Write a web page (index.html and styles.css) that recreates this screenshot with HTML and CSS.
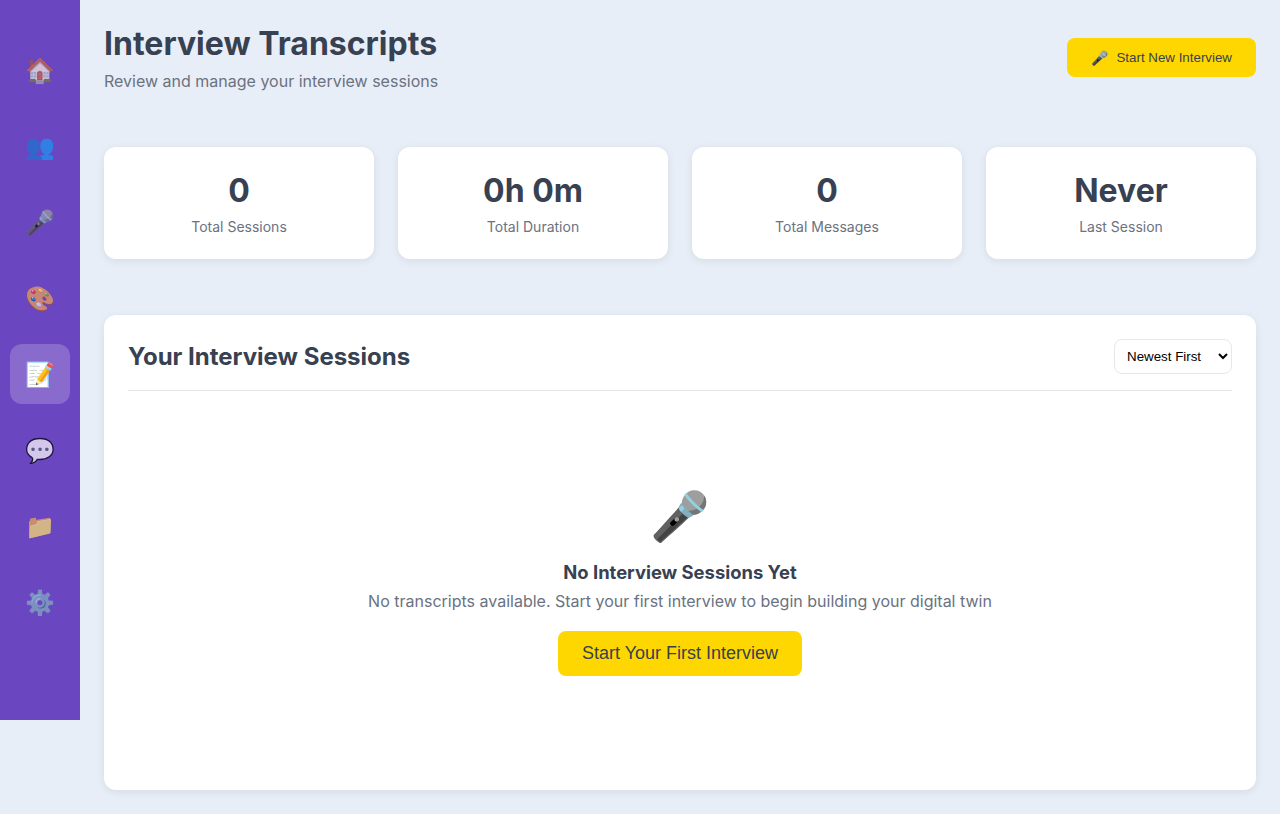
FILE: index.html
```html
<!DOCTYPE html>
<html lang="en">
<head>
<meta charset="utf-8">
<title>Interview Transcripts</title>
<link rel="stylesheet" href="styles.css">
</head>
<body>
<div class="app">
  <nav class="sidebar">
    <a class="nav-item">🏠</a>
    <a class="nav-item">👥</a>
    <a class="nav-item">🎤</a>
    <a class="nav-item">🎨</a>
    <a class="nav-item active">📝</a>
    <a class="nav-item">💬</a>
    <a class="nav-item">📁</a>
    <a class="nav-item">⚙️</a>
  </nav>
  <main class="main">
    <header class="page-header">
      <div>
        <h1 class="page-title">Interview Transcripts</h1>
        <p class="page-subtitle">Review and manage your interview sessions</p>
      </div>
      <button class="btn-new"><span class="btn-icon">🎤</span>Start New Interview</button>
    </header>
    <section class="stats">
      <div class="stat-card"><div class="stat-value">0</div><div class="stat-label">Total Sessions</div></div>
      <div class="stat-card"><div class="stat-value">0h 0m</div><div class="stat-label">Total Duration</div></div>
      <div class="stat-card"><div class="stat-value">0</div><div class="stat-label">Total Messages</div></div>
      <div class="stat-card"><div class="stat-value">Never</div><div class="stat-label">Last Session</div></div>
    </section>
    <section class="panel">
      <div class="panel-header">
        <h2 class="panel-title">Your Interview Sessions</h2>
        <select class="sort-select"><option>Newest First</option><option>Oldest First</option></select>
      </div>
      <div class="empty">
        <div class="empty-icon">🎤</div>
        <h3 class="empty-title">No Interview Sessions Yet</h3>
        <p class="empty-text">No transcripts available. Start your first interview to begin building your digital twin</p>
        <button class="btn-first">Start Your First Interview</button>
      </div>
    </section>
  </main>
</div>
</body>
</html>
```
FILE: styles.css
```css
* { box-sizing: border-box; margin: 0; padding: 0; }
html, body { height: 100%; }
body {
  background: #e8eef7;
  font-family: Inter, "Noto Sans", sans-serif;
  color: #374151;
  overflow: hidden;
  text-rendering: optimizeSpeed;
}
.app { display: flex; align-items: flex-start; }
.sidebar {
  width: 80px;
  height: 720px;
  flex: none;
  background: #6b46c1;
  padding: 40px 10px 0;
  display: flex;
  flex-direction: column;
  gap: 16px;
}
.nav-item {
  width: 60px;
  height: 60px;
  border-radius: 12px;
  display: flex;
  align-items: center;
  justify-content: center;
  font-size: 24px;
  opacity: 0.7;
}
.nav-item.active { background: rgba(255,255,255,0.2); opacity: 1; }
.main { flex: 1; min-width: 0; padding: 24px; }
.page-header {
  display: flex;
  justify-content: space-between;
  align-items: center;
  margin-bottom: 56px;
}
.page-title { font-size: 32px; font-weight: 700; line-height: 39px; color: #374151; }
.page-subtitle { font-size: 16px; line-height: 20px; color: #6b7280; margin-top: 8px; }
.btn-new {
  display: flex;
  align-items: center;
  height: 39px;
  padding: 0 24px;
  background: #ffd700;
  border: none;
  border-radius: 8px;
  font-family: "Liberation Sans", Arial, sans-serif;
  font-size: 13.33px;
  color: #374151;
}
.btn-icon { margin-right: 8px; font-size: 14px; }
.stats {
  display: grid;
  grid-template-columns: repeat(4, 1fr);
  gap: 24px;
  margin-bottom: 56px;
}
.stat-card {
  height: 112px;
  background: #fff;
  border-radius: 12px;
  box-shadow: 0 2px 8px rgba(0,0,0,0.08);
  padding-top: 24px;
  text-align: center;
}
.stat-value { font-size: 32px; font-weight: 700; line-height: 39px; color: #374151; }
.stat-label { font-size: 14px; line-height: 17px; color: #6b7280; margin-top: 8px; }
.panel {
  height: 475px;
  background: #fff;
  border-radius: 12px;
  box-shadow: 0 2px 8px rgba(0,0,0,0.08);
  padding: 24px;
}
.panel-header {
  display: flex;
  justify-content: space-between;
  align-items: center;
  padding-bottom: 16px;
  border-bottom: 1px solid #e5e7eb;
}
.panel-title { font-size: 24px; font-weight: 700; line-height: 29px; color: #374151; }
.sort-select {
  width: 118px;
  height: 35px;
  padding: 8px;
  background: #fff;
  border: 1px solid #e5e7eb;
  border-radius: 8px;
  font-family: "Liberation Sans", Arial, sans-serif;
  font-size: 13.33px;
  color: #000;
}
.empty {
  display: flex;
  flex-direction: column;
  align-items: center;
  padding-top: 96px;
  text-align: center;
}
.empty-icon { font-size: 48px; line-height: 58px; margin-bottom: 16px; }
.empty-title { font-size: 18.4px; font-weight: 700; line-height: 23px; color: #374151; margin-bottom: 8px; }
.empty-text { font-size: 16px; line-height: 19px; color: #6b7280; margin-bottom: 20px; }
.btn-first {
  height: 45px;
  padding: 0 24px;
  background: #ffd700;
  border: none;
  border-radius: 8px;
  font-family: "Liberation Sans", Arial, sans-serif;
  font-size: 18px;
  color: #374151;
}
```
